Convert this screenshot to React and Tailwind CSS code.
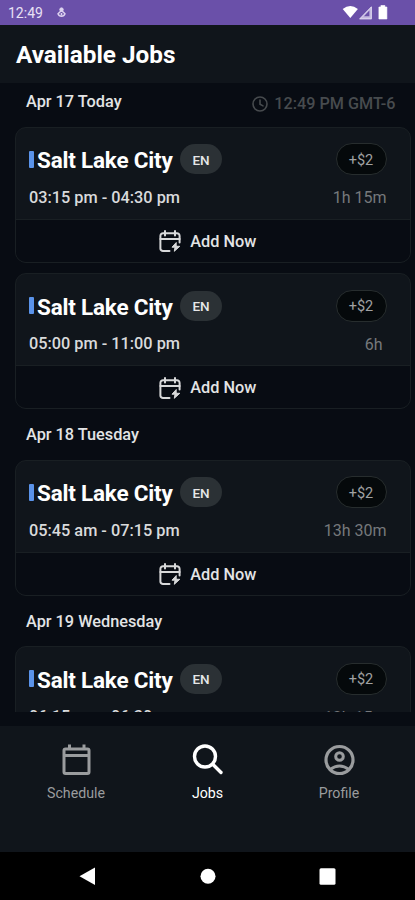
const DAYS = [
  {
    label: 'Apr 17 Today',
    clock: '12:49 PM GMT-6',
    jobs: [
      { city: 'Salt Lake City', time: '03:15 pm - 04:30 pm', length: '1h 15m' },
      { city: 'Salt Lake City', time: '05:00 pm - 11:00 pm', length: '6h', inset: true },
    ],
  },
  {
    label: 'Apr 18 Tuesday',
    jobs: [{ city: 'Salt Lake City', time: '05:45 am - 07:15 pm', length: '13h 30m' }],
  },
  {
    label: 'Apr 19 Wednesday',
    jobs: [{ city: 'Salt Lake City', time: '06:15 am - 06:30 pm', length: '12h 15m' }],
  },
];

function StatusBar() {
  return (
    <div className="h-[25px] shrink-0 bg-[#6a50a9] flex items-center justify-between pl-2 pr-[26px]">
      <div className="flex items-center gap-[13px] pt-px">
        <span className="text-[14px] leading-none text-[#e8e0f5]">12:49</span>
        <svg className="w-[11px] h-3" viewBox="0 0 11 12" fill="none" stroke="#ddd3f0">
          <circle cx="5.5" cy="2.6" r="1.8" fill="#ddd3f0" strokeWidth="0.8" />
          <path d="M5.5 3.500L2 6.800a3.700 3.700 0 007 0z" strokeWidth="1.5" strokeLinejoin="round" />
          <path d="M5.5 6v2.500" strokeWidth="1.600" />
        </svg>
      </div>
      <svg className="w-[47px] h-[15px]" viewBox="0 0 47 15">
        <path d="M0.7 4.1Q8.3-2.3 15.9 4.1L8.3 13z" fill="#fff" />
        <path d="M17 14.2L29.8 1v13.2z" fill="#c4b7e0" />
        <path d="M24.2 8.8l3.2-3.400v5.900h-5.400z" fill="#6a50a9" />
        <path d="M17.8 13.8L29.3 2v11.8z" fill="none" stroke="#e5dff2" strokeWidth="0.8" />
        <path d="M38.9 0.5h4v1.5h2v12h-8v-12h2z" fill="#fff" stroke="#fff" strokeWidth="0.6" strokeLinejoin="round" />
      </svg>
    </div>
  );
}

function CalendarAddIcon() {
  return (
    <svg className="w-[22px] h-[23px]" viewBox="0 0 22 23" fill="none" stroke="#d8d9da" strokeWidth="2" strokeLinecap="round">
      <path d="M10.500 21H4a2.600 2.600 0 01-2.600-2.600V5.900A2.600 2.600 0 014 3.300h14a2.600 2.600 0 012.600 2.600V12.500" />
      <path d="M1.400 9h19.200M6 1v4.500M16 1v4.500" />
      <path d="M17 12.800l-4 4.400h3l-.7 4.100 5.500-5h-3.300z" fill="#d8d9da" strokeWidth="1" strokeLinejoin="round" />
    </svg>
  );
}

function JobCard({ job }) {
  return (
    <div className="h-[136px] mb-[10.5px] rounded-[11px] border-[1.5px] border-[#191f23] bg-[#10151b] overflow-hidden flex flex-col">
      <div className="h-[91px] shrink-0 pl-[13px] pr-[23px] pt-[15.5px]">
        <div className="flex items-center justify-between h-8">
          <div className="flex items-center">
            <span className="w-[5px] h-[17px] rounded-[1px] bg-[#5a93ea]"></span>
            <h2 className="ml-[3px] pt-[2px] w-[135px] text-[22.5px] leading-8 font-bold tracking-[-0.2px] text-white whitespace-nowrap">{job.city}</h2>
            <span className="ml-2 w-[42px] h-[30px] rounded-full bg-[#2b3135] flex items-center justify-center pt-[2px] text-[13.5px] font-medium text-[#e6e7e8]">EN</span>
          </div>
          <span className="w-[51px] h-8 rounded-full border-[1.5px] border-[#272d2e] bg-[#05090b] flex items-center justify-center pt-[3px] text-[14.5px] text-[#a0a1a2]">+$2</span>
        </div>
        <div className="flex items-center justify-between mt-[13px] h-5 text-[16px]">
          <span className="text-[16.3px] font-medium text-[#d9dadb] whitespace-nowrap">{job.time}</span>
          <span className={job.inset ? 'text-[#76797c] mr-1' : 'text-[#76797c]'}>{job.length}</span>
        </div>
      </div>
      <button className="flex-1 border-t-[1.5px] border-[#191f23] bg-[#080c13] flex items-center justify-center gap-[9px] pt-[2px] pr-2.5 text-[16.3px] font-medium text-[#e3e4e5]">
        <CalendarAddIcon />
        <span className="pt-px">Add Now</span>
      </button>
    </div>
  );
}

function NavItem({ label, active, children }) {
  return (
    <div className={active ? 'w-[131.5px] flex flex-col items-center text-white' : 'w-[131.5px] flex flex-col items-center text-[#9a9c9e]'}>
      <svg className="w-9 h-9" viewBox="0 0 36 36" fill="none" stroke="currentColor" strokeWidth="3">
        {children}
      </svg>
      <span className="mt-[5px] text-[14.2px] leading-5">{label}</span>
    </div>
  );
}

export default function App() {
  return (
    <div className="w-[415px] h-[900px] flex flex-col bg-[#080c13] overflow-hidden font-['Roboto',sans-serif]">
      <StatusBar />
      <header className="h-[58px] shrink-0 bg-[#10151b] flex items-center pl-4">
        <h1 className="pt-[2px] text-[24.3px] font-bold text-white">Available Jobs</h1>
      </header>

      <main className="h-[629px] shrink-0 overflow-hidden pt-[3.5px] pl-[15px] pr-[4.5px]">
        {DAYS.map((day) => (
          <section key={day.label}>
            <div className="h-[29px] mb-[11px] flex items-center justify-between pl-[11px] pr-[15px]">
              <span className="pt-[3px] text-[16.3px] font-medium text-[#e3e4e5]">{day.label}</span>
              {day.clock && (
                <span className="flex items-center gap-[6px] text-[16.2px] font-medium text-[#474b4e] mt-[6px]">
                  <svg className="w-4 h-4" viewBox="0 0 16 16" fill="none" stroke="currentColor" strokeWidth="1.6">
                    <circle cx="8" cy="8" r="7" />
                    <path d="M8 4v4.300l3 1.600" strokeLinecap="round" />
                  </svg>
                  {day.clock}
                </span>
              )}
            </div>
            {day.jobs.map((job) => (
              <JobCard key={job.time} job={job} />
            ))}
          </section>
        ))}
      </main>

      <nav className="mt-[14px] h-[126px] shrink-0 bg-[#10151b] flex justify-center pt-4">
        <NavItem label="Schedule">
          <rect x="6" y="7" width="25" height="24.500" rx="1.500" />
          <path d="M6 13.500h25M11.500 2.500v4M26 2.500v4" />
        </NavItem>
        <NavItem label="Jobs" active>
          <circle cx="15" cy="14.500" r="10.500" strokeWidth="3.400" />
          <path d="M23 22.500l8 8" strokeWidth="3.400" strokeLinecap="round" />
        </NavItem>
        <NavItem label="Profile">
          <circle cx="18.500" cy="18" r="13.500" strokeWidth="3.200" />
          <circle cx="18.500" cy="14.500" r="3.800" />
          <path d="M9 27.500q9.500-7 19 0" />
        </NavItem>
      </nav>

      <div className="h-12 shrink-0 bg-black flex items-center justify-center">
        <svg className="w-[258px] h-5" viewBox="0 0 258 20" fill="#fff">
          <path d="M0.500 10.300L16 1.500v17.500z" />
          <circle cx="129" cy="10.300" r="7.500" />
          <rect x="240.500" y="2.300" width="16" height="16.500" rx="1.500" />
        </svg>
      </div>
    </div>
  );
}
